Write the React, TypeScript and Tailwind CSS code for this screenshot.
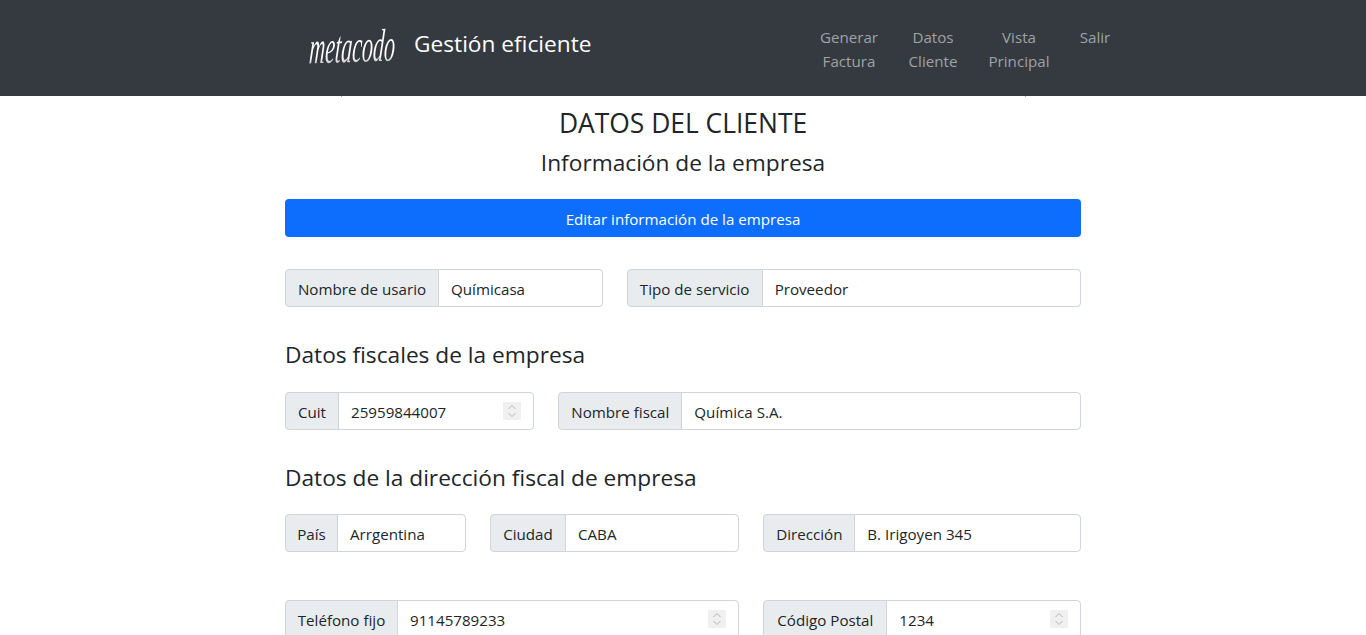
function Spinner() {
  return (
    <svg className="block shrink-0 bg-[#f0f0f0]" width="18" height="18" viewBox="0 0 18 18" fill="none" stroke="#b4b4b4" strokeWidth="1">
      <path d="M5.5 7 9 3.5 12.5 7" />
      <path d="M5.5 11 9 14.5 12.5 11" />
    </svg>
  );
}

function Field({ label, value, span, labelW, spin }: { label: string; value: string; span: string; labelW: string; spin?: boolean }) {
  return (
    <div className={`${span} flex h-[38px] text-[15.15px] leading-[24px] text-[#212529]`}>
      <span className={`${labelW} flex shrink-0 items-center justify-center rounded-l-[4px] border border-[#ced4da] bg-[#e9ecef] pt-px whitespace-nowrap`}>{label}</span>
      <span className="-ml-px flex min-w-0 flex-1 items-center justify-between rounded-r-[4px] border border-[#ced4da] bg-white px-3 whitespace-nowrap">
        <span className="pt-px">{value}</span>
        {spin && <Spinner />}
      </span>
    </div>
  );
}

function NavLink({ a, b, w }: { a: string; b?: string; w: string }) {
  return (
    <a className={`${w} block text-center text-[15.15px] leading-[24px] text-[#a0a2a5]`}>
      {a}
      {b && <br />}
      {b}
    </a>
  );
}

export default function App() {
  return (
    <div className="h-[635px] overflow-hidden bg-white font-['Open_Sans','Noto_Sans',sans-serif] text-[#212529]">
      <nav className="relative flex h-[96px] items-start justify-between bg-[#343a40] pr-[237px] pl-[309px]">
        <div className="flex items-start">
          <div className="mt-[24px] flex h-[46px] w-[87px] items-center justify-center">
            <span className="inline-block -rotate-2 scale-x-[0.48] skew-x-[-12deg] bg-gradient-to-b from-white from-70% to-[#8a8a8a] bg-clip-text font-['Liberation_Serif',serif] text-[46px] leading-none whitespace-nowrap text-transparent italic">metacodo</span>
          </div>
          <span className="mt-[27px] ml-[18px] text-[22.7px] leading-[33px] whitespace-nowrap text-white">Gestión eficiente</span>
        </div>
        <div className="mt-[25px] flex">
          <NavLink a="Generar" b="Factura" w="w-[80px]" />
          <NavLink a="Datos" b="Cliente" w="w-[88px]" />
          <NavLink a="Vista" b="Principal" w="w-[84px]" />
          <NavLink a="Salir" w="w-[68px]" />
        </div>
        <span className="absolute top-[96px] left-[341px] h-px w-px bg-[#aaaaaa]" />
        <span className="absolute top-[96px] left-[1025px] h-px w-px bg-[#aaaaaa]" />
      </nav>
      <main className="mx-auto w-[796px] pt-[8px]">
        <h1 className="text-center text-[26.4px] leading-[39px] font-normal">DATOS DEL CLIENTE</h1>
        <h2 className="mt-[2px] text-center text-[22.7px] leading-[36px] font-normal">Información de la empresa</h2>
        <button className="mt-[18px] block h-[38px] w-full rounded-[4px] bg-[#0d6efd] pt-[2px] text-center text-[15.15px] text-white">Editar información de la empresa</button>
        <div className="mt-[32px] grid grid-cols-12 gap-x-6">
          <Field span="col-span-5" labelW="w-[154px]" label="Nombre de usario" value="Químicasa" />
          <Field span="col-span-7" labelW="w-[136px]" label="Tipo de servicio" value="Proveedor" />
        </div>
        <h3 className="mt-[30px] text-[22.7px] leading-[36px] font-normal">Datos fiscales de la empresa</h3>
        <div className="mt-[19px] grid grid-cols-12 gap-x-6">
          <Field span="col-span-4" labelW="w-[54px]" label="Cuit" value="25959844007" spin />
          <Field span="col-span-8" labelW="w-[124px]" label="Nombre fiscal" value="Química S.A." />
        </div>
        <h3 className="mt-[30px] text-[22.7px] leading-[36px] font-normal">Datos de la dirección fiscal de empresa</h3>
        <div className="mt-[18px] grid grid-cols-12 gap-x-6 gap-y-[48px]">
          <Field span="col-span-3" labelW="w-[53px]" label="País" value="Arrgentina" />
          <Field span="col-span-4" labelW="w-[76px]" label="Ciudad" value="CABA" />
          <Field span="col-span-5" labelW="w-[92px]" label="Dirección" value="B. Irigoyen 345" />
          <Field span="col-span-7" labelW="w-[113px]" label="Teléfono fijo" value="91145789233" spin />
          <Field span="col-span-5" labelW="w-[124px]" label="Código Postal" value="1234" spin />
        </div>
      </main>
    </div>
  );
}
